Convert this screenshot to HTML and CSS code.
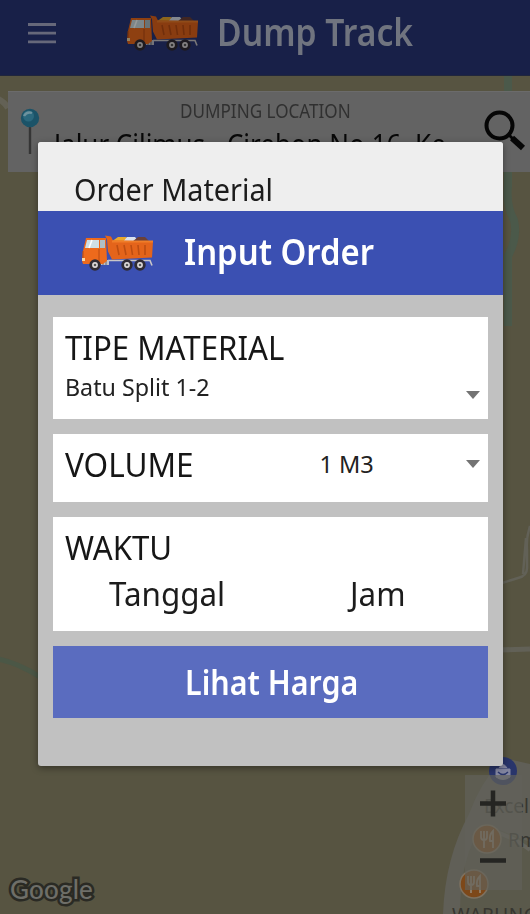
FILE: index.html
```html
<!DOCTYPE html>
<html lang="id">
<head>
<meta charset="utf-8">
<title>Dump Track</title>
<link rel="stylesheet" href="styles.css">
</head>
<body>
<svg class="defs" aria-hidden="true">
  <symbol id="truck" viewBox="0 0 74 38">
    <path d="M27 26.500H69l2 5" fill="none" stroke="#c9c6c8" stroke-width="1.6"/>
    <path d="M20 26h8v5h-8z" fill="#bfc0cb"/>
    <path d="M22 26v5M25 26v5" stroke="#555" stroke-width=".8"/>
    <path d="M30 8 37 3 45 3 50 8z" fill="#e9a92e"/>
    <path d="M42 8l4-5 8 0 4 5z" fill="#dbe2ee"/>
    <path d="M51 8l6-5 7 0 5 5z" fill="#6b4038"/>
    <path d="M24 1.500l6 1 2 4 40 1-1 16-40 2-4-8-1-12z" fill="#e4641b"/>
    <path d="M31 7.500h41" stroke="#f07d28" stroke-width="1.8"/>
    <path d="M36 11l2 10M43 11l2 10M50 11l1.500 10M57 11l1 10M64 11v10" stroke="#bd4d12" stroke-width="1.600"/>
    <path d="M5 4h20l1 23-4 3H2l-1-3 1-10z" fill="#ed6a1c"/>
    <path d="M6 6h12v8H4z" fill="#cfe0e6"/>
    <path d="M19 6h5v8h-5z" fill="#aebfc6"/>
    <path d="M11 6 8 14" stroke="#fff" stroke-width="1.5"/>
    <path d="M2 17v7M18 15v12" stroke="#b84a12" stroke-width="1"/>
    <path d="M1 24h3v3H1z" fill="#f5d9a5"/>
    <g fill="#dedada" stroke="#302b34" stroke-width="2.8">
      <circle cx="14" cy="31" r="4.3"/><circle cx="46" cy="31" r="4.3"/><circle cx="59" cy="31" r="4.3"/>
    </g>
    <g fill="#555"><circle cx="14" cy="31" r="1.3"/><circle cx="46" cy="31" r="1.3"/><circle cx="59" cy="31" r="1.3"/></g>
  </symbol>
</svg>

<div class="app">
  <header class="topbar">
    <svg class="menu" viewBox="0 0 28 22"><path d="M0 2.5h28M0 11.2h28M0 19.8h28" stroke="#66687a" stroke-width="2.8"/></svg>
    <svg class="truck truck-dim"><use href="#truck"/></svg>
    <h1 class="brand">Dump Track</h1>
  </header>

  <main class="map">
    <svg class="map-art" viewBox="0 0 530 838">
      <g fill="none">
        <path d="M-4 22q8 3 12 10" stroke="#636155" stroke-width="6"/>
        <path d="M-2 583q20 4 42 18" stroke="#4b5746" stroke-width="5"/>
        <path d="M508 0v110q-2 20 6 34 4 18-6 36v70" stroke="#4b594a" stroke-width="8"/>
        <path d="M530 450q-4 12-3 24v18q0 8-9 10l-16 5M526 462l-3 36" stroke="#626157" stroke-width="2.5"/>
        <path d="M498 574l32-1" stroke="#626157" stroke-width="5"/>
      </g>
      <path d="M443 838q2-56 26-100 13-35 35-56l26 6v150z" fill="#605f57"/>
      <path d="M460 838q0-60 24-90l46 18v72z" fill="#5a594b"/>
      <path d="M490 754q22 6 40 20" fill="none" stroke="#66655d" stroke-width="4"/>
      <circle cx="503" cy="695" r="14" fill="#29356b"/>
      <path d="M496 693h14v8q-7 5-14 0zM499 692q4-7 8 0" fill="#8386a0" stroke="#8386a0"/>
      <path d="M498 696q5 5 10 0" fill="none" stroke="#29356b" stroke-width="1.5"/>
      <g fill="#7d4819" stroke="#7d7160" stroke-width="1.5"><circle cx="487" cy="763" r="14"/><circle cx="474" cy="808" r="14"/></g>
      <g fill="none" stroke="#92806c" stroke-width="1.8">
        <path id="fork" d="M481 755v6q0 3 3 3t3-3v-6M484 755v17M493 772v-17q-4 4-3 10h3"/>
        <use href="#fork" x="-13" y="45"/>
      </g>
    </svg>

    <section class="location">
      <svg class="pin" viewBox="0 0 20 48">
        <path d="M10 18v28" stroke="#353535" stroke-width="2.4"/>
        <circle cx="10" cy="10" r="9.2" fill="#1b5368"/>
        <circle cx="8.5" cy="8" r="5.5" fill="#2b687d"/>
        <path d="M4 8q3-5 8-3" fill="none" stroke="#6d929e" stroke-width="2.4"/>
      </svg>
      <div class="location-text">
        <div class="location-label">DUMPING LOCATION</div>
        <div class="location-value">Jalur Cilimus - Cirebon No.16, Ke</div>
      </div>
      <svg class="search" viewBox="0 0 42 42">
        <circle cx="15.500" cy="15.500" r="13" fill="none" stroke="#060606" stroke-width="4"/>
        <path d="M25 25l4 4" stroke="#060606" stroke-width="3"/>
        <path d="M28 28l11 10" stroke="#060606" stroke-width="6"/>
      </svg>
    </section>

    <span class="place place-excel">Excel</span>
    <span class="place place-rm">Rm</span>
    <span class="place place-warung">WARUNG</span>

    <div class="zoom">
      <svg viewBox="0 0 57 114"><path d="M15 28.500h26M28 15.500v26M15 85.500h26" stroke="#252522" stroke-width="4.500"/></svg>
    </div>
    <span class="google">Google</span>
  </main>
</div>

<div class="dialog" role="dialog">
  <div class="dialog-title"><span>Order Material</span></div>
  <div class="dialog-head">
    <svg class="truck"><use href="#truck"/></svg>
    <h2>Input Order</h2>
  </div>
  <div class="dialog-body">
    <div class="card card-type">
      <div class="field-label label-type">TIPE MATERIAL</div>
      <div class="field-row"><span class="value value-type">Batu Split 1-2</span><i class="caret"></i></div>
    </div>
    <div class="card card-volume">
      <div class="field-label label-volume">VOLUME</div>
      <span class="value value-volume">1 M3</span>
      <i class="caret"></i>
    </div>
    <div class="card card-time">
      <div class="field-label label-time">WAKTU</div>
      <div class="time-row"><span>Tanggal</span><span>Jam</span></div>
    </div>
    <button class="submit"><span>Lihat Harga</span></button>
  </div>
</div>
</body>
</html>
```
FILE: styles.css
```css
* { box-sizing: border-box; }
body { margin: 0; font-family: "Noto Sans", sans-serif; overflow: hidden; color: #1c1c1c; }
.defs { position: absolute; width: 0; height: 0; }
.app { width: 530px; height: 914px; display: flex; flex-direction: column; }

.topbar { height: 76px; flex: none; display: flex; align-items: flex-start; background: #182048; border-bottom: 1px solid #20263c; }
.menu { width: 28px; height: 22px; margin: 22px 0 0 28px; }
.truck { width: 74px; height: 38px; flex: none; }
.truck-dim { margin: 14px 0 0 70px; filter: brightness(.6); }
.brand { margin: 7px 0 0 17px; font-size: 37px; line-height: 50px; font-weight: 600; color: #70747f; white-space: nowrap; transform: scaleX(.91); transform-origin: 0 0; }

.map { position: relative; flex: 1; overflow: hidden; background: #575441; padding-top: 15px; }
.map-art { position: absolute; inset: 0; width: 530px; height: 838px; }

.location { position: relative; height: 81px; margin-left: 8px; display: flex; align-items: flex-start; background: #636363; border-top: 1px solid #6b6b6b; }
.pin { width: 20px; height: 48px; margin: 16px 0 0 12px; flex: none; }
.location-text { width: 396px; margin-left: 14px; flex: none; white-space: nowrap; }
.location-label { margin: 6px 0 0 126px; font-size: 19px; line-height: 26px; color: #303030; transform: scaleX(.9); transform-origin: 0 0; }
.location-value { margin-top: 0; font-size: 29px; line-height: 40px; color: #080808; transform: scaleX(.895); transform-origin: 0 0; }
.search { width: 42px; height: 42px; margin: 18px 0 0 34px; flex: none; }

.place { position: absolute; font-size: 19px; line-height: 26px; color: #373630; white-space: nowrap; }
.place-excel { left: 484px; top: 717px; }
.place-rm { left: 508px; top: 751px; }
.place-warung { left: 452px; top: 826px; letter-spacing: .5px; }
.zoom { position: absolute; left: 465px; top: 699px; width: 57px; height: 115px; background: rgba(98, 98, 90, .68); }
.zoom svg { display: block; width: 57px; height: 114px; }
.google { position: absolute; left: 10px; top: 797px; font: 500 26px/32px Lato, sans-serif; letter-spacing: .2px; color: #6e6e68; -webkit-text-stroke: 5px #2a2a24; paint-order: stroke fill; }

.dialog { position: absolute; left: 37.500px; top: 142px; width: 465px; height: 624px; border-radius: 3px; background: #c1c1c1; overflow: hidden; box-shadow: 0 2px 7px rgba(0, 0, 0, .4); }
.dialog-title { height: 69px; padding: 27px 0 0 36.500px; background: #eee; font-size: 30px; line-height: 42px; white-space: nowrap; }
.dialog-title span { display: inline-block; transform: scaleX(.96); transform-origin: 0 0; }
.dialog-head { height: 84px; display: flex; align-items: flex-start; background: #3b50b2; padding: 23px 0 0 43px; }
.dialog-head h2 { margin: -8px 0 0 29px; font-size: 36.500px; line-height: 50px; font-weight: 600; color: #fff; white-space: nowrap; transform: scaleX(.9); transform-origin: 0 0; }
.dialog-body { padding: 22px 15px 0; display: flex; flex-direction: column; gap: 15px; }

.card { background: #fff; white-space: nowrap; }
.field-label { font-size: 32.500px; line-height: 44px; color: #161616; transform-origin: 0 0; }
.label-type, .label-time { transform: scaleX(.96); }
.label-volume { transform: scaleX(.97); width: 133px; }
.value { font-size: 23.500px; line-height: 32px; color: #222; transform-origin: 0 0; }
.value-type { transform: scaleX(.99); }
.caret { width: 0; height: 0; border: 7.500px solid transparent; border-top: 8px solid #737373; border-bottom: 0; }
.card-type { height: 102px; padding: 9px 8px 0 12px; }
.field-row { display: flex; align-items: flex-start; justify-content: space-between; margin-top: 1px; }
.field-row .caret { margin-top: 20px; }
.card-volume { height: 68px; display: flex; align-items: flex-start; padding: 9px 8px 0 12px; }
.value-volume { margin: 5px auto 0 122px; }
.card-volume .caret { margin-top: 17px; }
.card-time { height: 114px; padding: 9px 12px 0; }
.time-row { display: flex; padding-left: 44px; margin-top: 2px; font-size: 32px; line-height: 44px; }
.time-row span { width: 241px; transform: scaleX(.98); transform-origin: 0 0; }
.time-row span:last-child { width: 60px; }
.submit { height: 72px; padding: 12px 0 0 132px; border: 0; background: #5a6cbf; color: #fff; font: 600 35px/48px "Noto Sans", sans-serif; text-align: left; display: flex; align-items: flex-start; white-space: nowrap; }
.submit span { transform: scaleX(.87); transform-origin: 0 0; }
```
